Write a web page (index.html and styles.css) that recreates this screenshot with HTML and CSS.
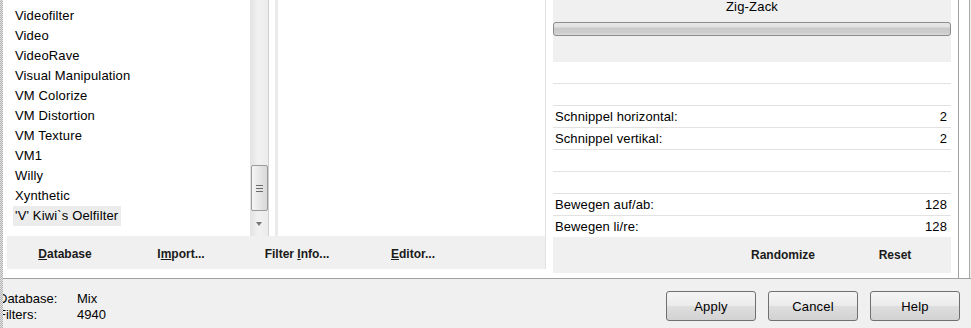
FILE: index.html
```html
<!DOCTYPE html>
<html>
<head>
<meta charset="utf-8">
<link rel="stylesheet" href="styles.css">
</head>
<body>
<div class="page">
  <div class="edge"></div>
  <div class="main">
    <div class="top">
      <div class="panel">
        <div class="leftgroup">
          <div class="lists">
            <div class="list">
              <div class="item">Videofilter</div>
              <div class="item">Video</div>
              <div class="item">VideoRave</div>
              <div class="item">Visual Manipulation</div>
              <div class="item">VM Colorize</div>
              <div class="item">VM Distortion</div>
              <div class="item">VM Texture</div>
              <div class="item">VM1</div>
              <div class="item">Willy</div>
              <div class="item">Xynthetic</div>
              <div class="item"><span class="sel">'V' Kiwi`s Oelfilter</span></div>
            </div>
            <div class="scrollbar">
              <div class="thumb"><span class="grip"></span><span class="grip"></span><span class="grip"></span></div>
              <div class="arrow"></div>
            </div>
            <div class="gap"></div>
            <div class="colsep"></div>
            <div class="middle"></div>
          </div>
          <div class="bar">
            <div class="bbtn"><u>D</u>atabase</div>
            <div class="bbtn">I<u>m</u>port...</div>
            <div class="bbtn">Filter <u>I</u>nfo...</div>
            <div class="bbtn"><u>E</u>ditor...</div>
          </div>
        </div>
        <div class="vsep"></div>
        <div class="right">
          <div class="header">
            <div class="title">Zig-Zack</div>
            <div class="slider"></div>
          </div>
          <div class="rows">
            <div class="row"></div>
            <div class="row"></div>
            <div class="row"><span>Schnippel horizontal:</span><span>2</span></div>
            <div class="row"><span>Schnippel vertikal:</span><span>2</span></div>
            <div class="row"></div>
            <div class="row"></div>
            <div class="row"><span>Bewegen auf/ab:</span><span>128</span></div>
            <div class="row last"><span>Bewegen li/re:</span><span>128</span></div>
          </div>
          <div class="footer">
            <div class="fbtn">Randomize</div>
            <div class="fbtn">Reset</div>
          </div>
        </div>
      </div>
      <div class="rstrip"></div>
    </div>
    <div class="bottom">
      <div class="status">
        <span>Database:</span><span>Mix</span>
        <span>Filters:</span><span>4940</span>
      </div>
      <div class="buttons">
        <div class="btn">Apply</div>
        <div class="btn">Cancel</div>
        <div class="btn">Help</div>
      </div>
    </div>
  </div>
</div>
</body>
</html>
```

FILE: styles.css
```css
html, body {
  margin: 0;
  padding: 0;
}
body {
  width: 971px;
  height: 328px;
  overflow: hidden;
  background: #f0f0f0;
  font-family: "Liberation Sans", Arial, sans-serif;
  font-size: 13px;
  color: #000;
}
.page {
  display: flex;
  width: 971px;
  height: 328px;
}
.edge {
  width: 3px;
  flex: none;
  background: repeating-conic-gradient(#b4b4b4 0 25%, #e2e2e2 0 50%) 0 0 / 2px 2px;
}
.main {
  flex: 1;
  display: flex;
  flex-direction: column;
  overflow: hidden;
}
.top {
  display: flex;
  height: 278px;
  border-bottom: 1px solid #a0a0a0;
  flex: none;
}
.panel {
  width: 955px;
  height: 269px;
  padding-bottom: 9px;
  background: #fff;
  border-right: 1px solid #a0a0a0;
  display: flex;
  flex: none;
}
.rstrip {
  flex: 1;
  background: linear-gradient(to right, #fff 0 10px, #a8a8a8 10px 11px, #f0f0f0 11px);
}
.leftgroup {
  width: 542px;
  display: flex;
  flex-direction: column;
  flex: none;
}
.lists {
  height: 236px;
  display: flex;
  flex: none;
}
.list {
  width: 237px;
  padding: 6px 0 0 10px;
  flex: none;
}
.item {
  height: 20px;
  line-height: 20px;
  padding-left: 2px;
  letter-spacing: 0.15px;
  white-space: nowrap;
}
.sel {
  display: inline-block;
  background: #ececec;
  margin-left: -2px;
  padding: 0 3px 0 2px;
}
.scrollbar {
  width: 19px;
  border-right: 1px solid #cfcfcf;
  background: linear-gradient(to right, #e2e2e2, #f1f1f1 45%, #ececec);
  display: flex;
  flex-direction: column;
  align-items: center;
  padding-top: 165px;
  box-sizing: border-box;
  flex: none;
}
.thumb {
  width: 17px;
  height: 46px;
  box-sizing: border-box;
  border: 1px solid #9a9a9a;
  border-radius: 2px;
  background: linear-gradient(to right, #f6f6f6, #e6e6e6 50%, #d9d9d9);
  display: flex;
  flex-direction: column;
  align-items: center;
  justify-content: center;
  gap: 2px;
}
.grip {
  width: 7px;
  height: 1px;
  background: #6a6a6a;
}
.arrow {
  margin-top: 11px;
  width: 0;
  height: 0;
  border-left: 3.5px solid transparent;
  border-right: 3.5px solid transparent;
  border-top: 4px solid #777;
}
.gap {
  width: 6px;
  flex: none;
}
.colsep {
  width: 3px;
  background: #ebebeb;
  flex: none;
}
.middle {
  flex: 1;
}
.bar {
  margin-left: 4px;
  width: 538px;
  height: 33px;
  background: #f0f0f0;
  display: flex;
  flex: none;
}
.bbtn {
  width: 116px;
  text-align: center;
  line-height: 37px;
  font-size: 12px;
  font-weight: bold;
  color: #1a1a1a;
}
.vsep {
  width: 1px;
  background: #e2e2e2;
  margin-right: 7px;
  flex: none;
}
.right {
  width: 398px;
  display: flex;
  flex-direction: column;
  flex: none;
}
.header {
  height: 62px;
  background: #f0f0f0;
  flex: none;
}
.title {
  height: 14px;
  line-height: 14px;
  text-align: center;
  letter-spacing: 0.2px;
}
.slider {
  margin-top: 8px;
  height: 14px;
  box-sizing: border-box;
  border: 1px solid #8c8c8c;
  border-radius: 3px;
  background: linear-gradient(#e8e8e8 0%, #e2e2e2 30%, #c9c9c9 45%, #cdcdcd 80%, #dadada 100%);
}
.rows {
  flex: none;
}
.row {
  height: 21px;
  line-height: 21px;
  border-bottom: 1px solid #e2e2e2;
  display: flex;
  justify-content: space-between;
  padding: 0 4px 0 2px;
  letter-spacing: 0.1px;
}
.row.last {
  border-bottom: none;
}
.footer {
  flex: 1;
  background: #f0f0f0;
  display: flex;
  justify-content: flex-end;
}
.fbtn {
  width: 112px;
  text-align: center;
  line-height: 36px;
  font-size: 12px;
  font-weight: bold;
  color: #1a1a1a;
}
.bottom {
  flex: 1;
  display: flex;
  justify-content: space-between;
  align-items: flex-start;
}
.status {
  margin-left: -5px;
  padding-top: 12px;
  display: grid;
  grid-template-columns: 79px auto;
  line-height: 16px;
  font-size: 13px;
}
.buttons {
  display: flex;
  gap: 12px;
  margin-top: 12px;
  margin-right: 11px;
}
.btn {
  width: 90px;
  height: 30px;
  box-sizing: border-box;
  border: 1px solid #707070;
  border-radius: 3px;
  background: linear-gradient(#f4f4f4 0%, #ececec 48%, #dedede 52%, #d2d2d2 100%);
  text-align: center;
  line-height: 30px;
  font-size: 13px;
  letter-spacing: 0.2px;
}
```
